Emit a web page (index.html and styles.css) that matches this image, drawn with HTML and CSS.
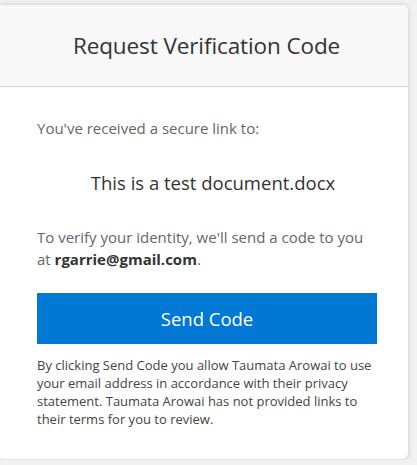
FILE: index.html
```html
<!DOCTYPE html>
<html>
<head>
<meta charset="utf-8">
<link rel="stylesheet" href="styles.css">
</head>
<body>
<div class="card">
  <div class="card-header">
    <h1 class="title">Request Verification Code</h1>
  </div>
  <div class="card-body">
    <p class="intro">You've received a secure link to:</p>
    <p class="doc">This is a test document.docx</p>
    <p class="verify">To verify your identity, we'll send a code to you at <strong class="email">rgarrie@gmail.com</strong>.</p>
    <button class="send-btn" type="button">Send Code</button>
    <p class="disclaimer">By clicking Send Code you allow Taumata Arowai to use your email address in accordance with their privacy statement. Taumata Arowai has not provided links to their terms for you to review.</p>
  </div>
</div>
</body>
</html>
```

FILE: styles.css
```css
html, body {
  margin: 0;
  padding: 0;
  background: #f2f2f2;
}
body {
  padding-top: 4px;
  font-family: "Open Sans", "Noto Sans", sans-serif;
}
.card {
  width: 413px;
  margin-left: -4px;
  height: 456px;
  box-sizing: border-box;
  background: #fff;
  border: 1px solid #e0e0e0;
  border-radius: 7px;
  box-shadow: 0 0 4px rgba(0,0,0,0.12);
  overflow: hidden;
  display: flex;
  flex-direction: column;
}
.card-header {
  height: 82px;
  box-sizing: border-box;
  background: #f8f8f8;
  border-bottom: 1px solid #d6d6d6;
  display: flex;
  align-items: center;
  justify-content: center;
  padding-left: 8px;
}
.title {
  margin: 0;
  font-weight: 400;
  font-size: 22.5px;
  color: #333;
  letter-spacing: -0.1px;
}
.card-body {
  padding: 31px 0 0 40px;
  width: 340px;
  display: flex;
  flex-direction: column;
}
.intro {
  margin: 0;
  font-size: 15px;
  line-height: 20px;
  color: #666;
}
.doc {
  margin: 32px 0 0;
  text-align: center;
  font-size: 18.5px;
  line-height: 26px;
  color: #333;
  padding-left: 12px;
}
.verify {
  margin: 30px 0 0;
  font-size: 15px;
  line-height: 22px;
  color: #666;
}
.email {
  color: #333;
  font-weight: 700;
}
.send-btn {
  margin-top: 23px;
  height: 51px;
  width: 340px;
  border: none;
  background: #0078d4;
  color: #fff;
  font-family: inherit;
  font-size: 18.5px;
  padding: 0;
}
.disclaimer {
  margin: 12px -4px 0 0;
  font-size: 13px;
  line-height: 18px;
  color: #444;
}
```
